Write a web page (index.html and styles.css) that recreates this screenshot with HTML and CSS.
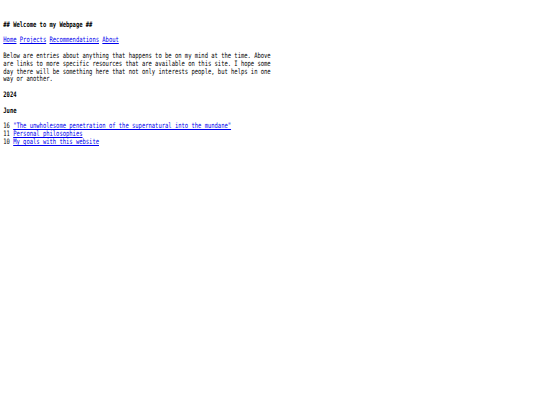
FILE: index.html
```html
<!DOCTYPE html>
<html>
<head>
<meta charset="utf-8">
<link rel="stylesheet" href="styles.css">
</head>
<body>
<div class="page">
  <h1 class="title">## Welcome to my Webpage ##</h1>
  <nav class="nav"><a href="#">Home</a> <a href="#">Projects</a> <a href="#">Recommendations</a> <a href="#">About</a></nav>
  <p class="intro">Below are entries about anything that happens to be on my mind at the time. Above are links to more specific resources that are available on this site. I hope some day there will be something here that not only interests people, but helps in one way or another.</p>
  <h2 class="year">2024</h2>
  <h3 class="month">June</h3>
  <ul class="entries">
    <li>16 <a href="#">"The unwholesome penetration of the supernatural into the mundane"</a></li>
    <li>11 <a href="#">Personal philosophies</a></li>
    <li>10 <a href="#">My goals with this website</a></li>
  </ul>
</div>
</body>
</html>
```
FILE: styles.css
```css
html, body {
  margin: 0;
  padding: 0;
  background: #ffffff;
}
body {
  font-family: "DejaVu Sans Mono", monospace;
  font-size: 7.5px;
  line-height: 7.85px;
  color: #000000;
}
.page {
  padding: 20.5px 0 0 4.5px;
  transform: scaleX(0.731);
  transform-origin: 0 0;
}
.title, .year, .month {
  font-size: 7.5px;
  font-weight: bold;
  margin: 0 0 7.85px 0;
}
.nav {
  margin: 0 0 7.85px 0;
}
.intro {
  width: 82ch;
  margin: 0 0 7.85px 0;
}
.entries {
  list-style: none;
  margin: 0;
  padding: 0;
}
a {
  color: #0000ee;
  text-decoration: underline;
}
```
